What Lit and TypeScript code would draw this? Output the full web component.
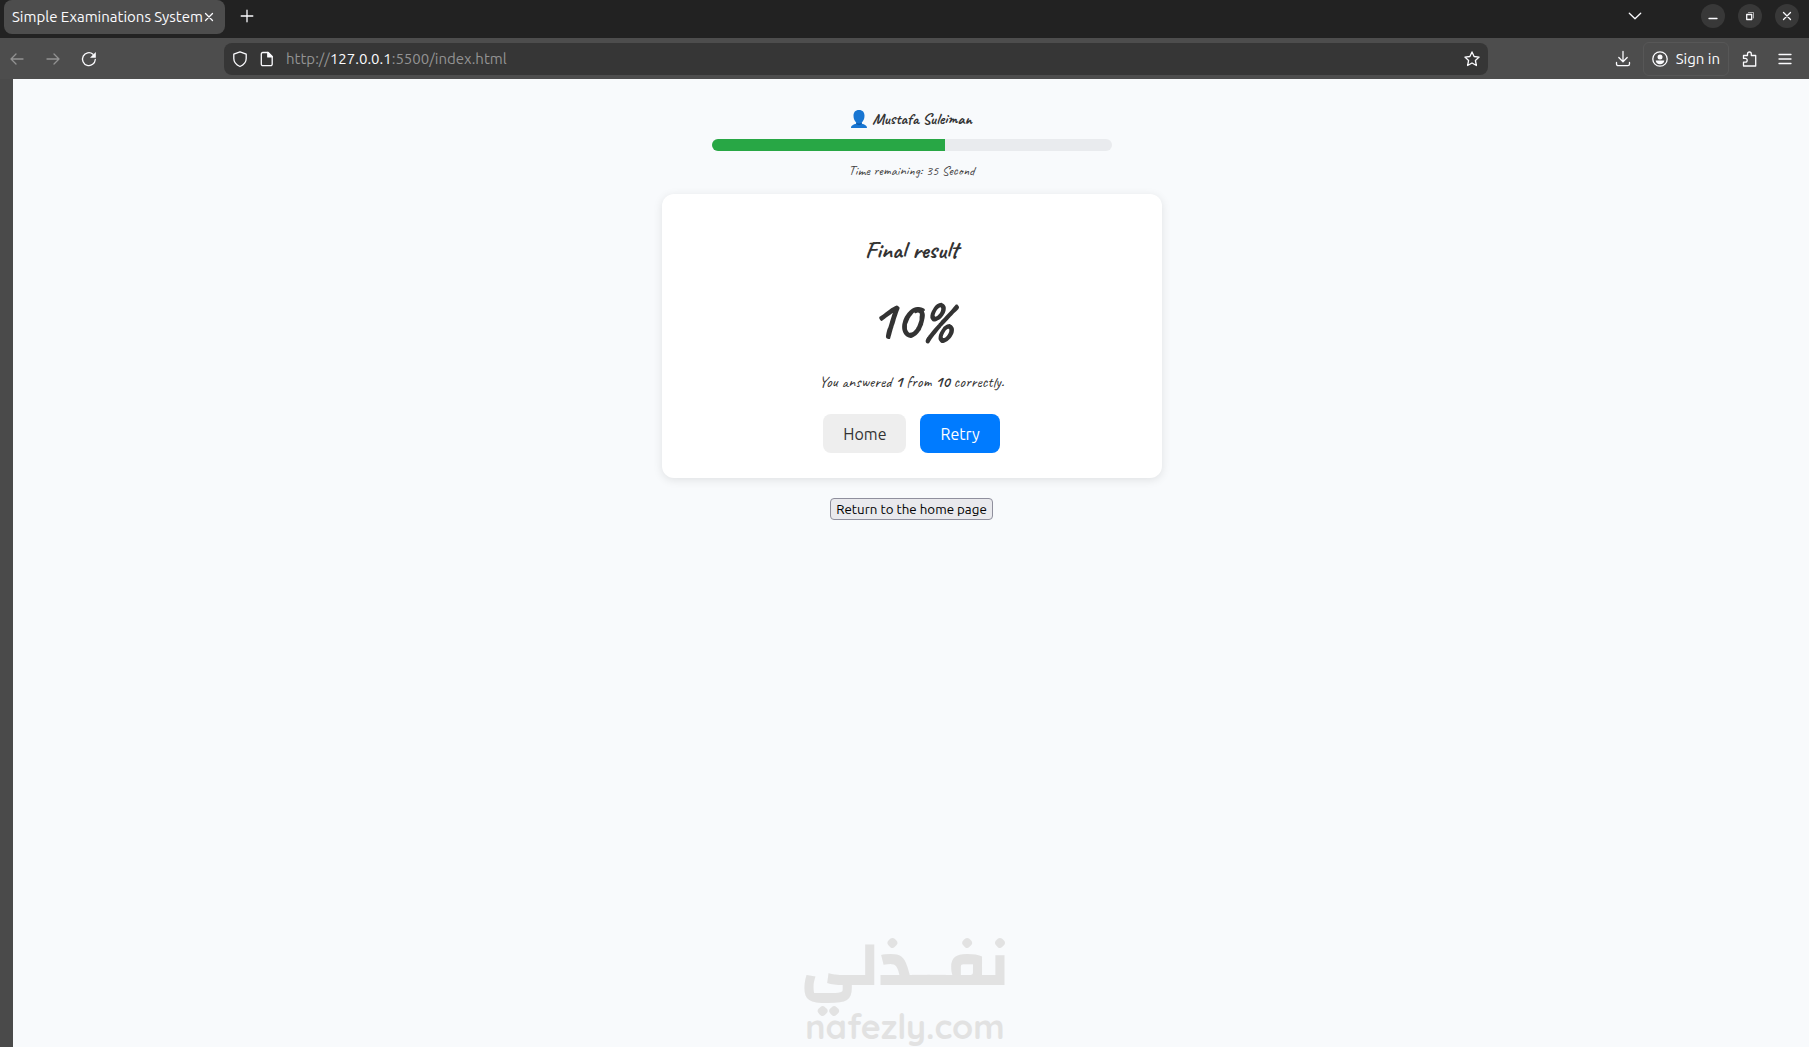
import { LitElement, html, css, svg } from "lit";
import { customElement, property, state } from "lit/decorators.js";

const icons: Record<string, unknown> = {
  back: svg`<path d="M14 8H2M7 3 2 8l5 5"/>`,
  forward: svg`<path d="M2 8h12M9 3l5 5-5 5"/>`,
  reload: svg`<path d="M14.300 8.500A6.400 6.400 0 1 1 12 3.200"/><path d="M14.800 1v5.800H9z" fill="currentColor" stroke="none"/>`,
  shield: svg`<path d="M8 .8 14.200 3.200v4.300c0 3.800-2.600 6.400-6.200 8-3.600-1.600-6.200-4.200-6.200-8V3.200z"/>`,
  page: svg`<path d="M3.800 1.500h5.400l4 4v7.700a1.500 1.500 0 0 1-1.500 1.500H3.800a1.500 1.500 0 0 1-1.500-1.500V3a1.500 1.500 0 0 1 1.500-1.500z"/><path d="M8.800 1.500v4.400h4.400z" fill="currentColor"/>`,
  star: svg`<path d="M8 .9l2.100 4.600 5 .6-3.700 3.400 1 5L8 12l-4.400 2.500 1-5L.9 6.100l5-.6z"/>`,
  download: svg`<path d="M8 .5v10M3.800 6.500 8 10.700l4.200-4.200M1.500 11.500v1.500a1.700 1.700 0 0 0 1.700 1.700h9.600a1.700 1.700 0 0 0 1.700-1.700v-1.500"/>`,
  account: svg`<circle cx="8" cy="8" r="7.200"/><circle cx="8" cy="6" r="2.500" fill="currentColor" stroke="none"/><path d="M3.700 9.500h8.600c0 2.200-2 3.700-4.300 3.700s-4.300-1.500-4.300-3.700z" fill="currentColor" stroke="none"/>`,
  puzzle: svg`<path d="M1.500 15v-3.800h1.800a1.900 1.900 0 0 0 0-3.800H1.500V4.500h4V2.900a1.900 1.900 0 0 1 3.800 0v1.600h4.400V15z"/>`,
  menu: svg`<path d="M2 3.500h12M2 8h12M2 12.500h12"/>`,
  plus: svg`<path d="M8 2.200v11.600M2.200 8h11.600"/>`,
  close: svg`<path d="M4.500 4.500l7 7M11.500 4.500l-7 7"/>`,
  chevron: svg`<path d="M2.300 5.200 8 10.700l5.700-5.500"/>`,
  minimize: svg`<path d="M4 10.500h8"/>`,
  restore: svg`<path d="M4.700 6.500h5v5h-5z"/><path d="M6.500 4.500h5v5.500" stroke-width="1" opacity=".6"/>`,
};

const icon = (name: string) => html`<svg
  class="icon"
  viewBox="0 0 16 16"
  width="16"
  height="16"
  aria-hidden="true"
>${icons[name]}</svg>`;

@customElement("browser-chrome")
export class BrowserChrome extends LitElement {
  static styles = css`
    :host {
      display: block;
      color: #fbfbfe;
      font: 15px/20px Ubuntu, "Noto Sans", "Open Sans", sans-serif;
    }
    button {
      all: unset;
      box-sizing: border-box;
      display: inline-flex;
      align-items: center;
      justify-content: center;
    }
    .icon {
      display: block;
      fill: none;
      stroke: currentColor;
      stroke-width: 1.3;
      stroke-linejoin: round;
      stroke-linecap: round;
      overflow: visible;
    }
    .strip {
      display: flex;
      align-items: center;
      height: 38px;
      box-sizing: border-box;
      padding: 0 10px 6px 4px;
      background: #222;
    }
    .tab {
      display: flex;
      align-items: center;
      justify-content: space-between;
      box-sizing: border-box;
      width: 221px;
      height: 34px;
      padding: 0 8px;
      border-radius: 8px;
      background: #4d4d4d;
      margin-bottom: -2px;
      white-space: nowrap;
    }
    .dismiss {
      margin-left: -2px;
    }
    .new {
      margin-left: 14px;
    }
    .list {
      margin-left: auto;
      margin-right: 58px;
    }
    .windows {
      display: flex;
      gap: 13px;
    }
    .window {
      width: 24px;
      height: 24px;
      border-radius: 50%;
      background: #383838;
    }
    .bar {
      display: flex;
      align-items: center;
      height: 41px;
      box-sizing: border-box;
      padding: 0 16px 0 9px;
      background: #4d4d4d;
    }
    .nav {
      display: flex;
      gap: 20px;
      width: 215px;
    }
    .nav button:disabled {
      color: #929292;
    }
    .address {
      display: flex;
      align-items: center;
      flex: 1;
      gap: 11px;
      height: 32px;
      box-sizing: border-box;
      padding: 0 8px;
      border-radius: 8px;
      background: #363636;
    }
    .url {
      flex: 1;
      color: #939393;
      text-decoration: none;
    }
    .host {
      color: #fbfbfe;
    }
    .tools {
      display: flex;
      align-items: center;
      justify-content: flex-end;
      width: 305px;
    }
    .sign {
      gap: 8px;
      height: 34px;
      margin: 0 13px 0 12px;
      padding: 0 8px;
      border: 1px solid #575757;
      border-radius: 6px;
      white-space: nowrap;
    }
    .menu {
      margin-left: 19px;
    }
  `;

  render() {
    return html`
      <div class="strip">
        <div class="tab">
          <span>Simple Examinations System</span>
          <button class="dismiss" aria-label="Close tab">${icon("close")}</button>
        </div>
        <button class="new" aria-label="New tab">${icon("plus")}</button>
        <button class="list" aria-label="List all tabs">${icon("chevron")}</button>
        <div class="windows">
          <button class="window" aria-label="Minimize">${icon("minimize")}</button>
          <button class="window" aria-label="Restore">${icon("restore")}</button>
          <button class="window" aria-label="Close">${icon("close")}</button>
        </div>
      </div>
      <div class="bar">
        <div class="nav">
          <button disabled aria-label="Back">${icon("back")}</button>
          <button disabled aria-label="Forward">${icon("forward")}</button>
          <button aria-label="Reload">${icon("reload")}</button>
        </div>
        <div class="address">
          <button aria-label="Tracking protection">${icon("shield")}</button>
          <button aria-label="Site information">${icon("page")}</button>
          <a class="url" href="http://127.0.0.1:5500/index.html"
            >http://<span class="host">127.0.0.1</span>:5500/index.html</a
          >
          <button aria-label="Bookmark">${icon("star")}</button>
        </div>
        <div class="tools">
          <button aria-label="Downloads">${icon("download")}</button>
          <button class="sign">${icon("account")}<span>Sign in</span></button>
          <button aria-label="Extensions">${icon("puzzle")}</button>
          <button class="menu" aria-label="Menu">${icon("menu")}</button>
        </div>
      </div>
    `;
  }
}

@customElement("exam-result")
export class ExamResult extends LitElement {
  @property() name = "";
  @property({ type: Number }) remaining = 0;
  @property({ type: Number }) limit = 60;
  @property({ type: Number }) correct = 0;
  @property({ type: Number }) total = 1;

  static styles = css`
    :host {
      display: flex;
      flex-direction: column;
      align-items: center;
      color: #333;
      font-family: Caveat, cursive;
    }
    .user {
      display: flex;
      align-items: center;
      gap: 5px;
      height: 24px;
      font-size: 16px;
      font-weight: 700;
      white-space: nowrap;
    }
    .track {
      width: 400px;
      max-width: 90%;
      height: 12px;
      margin-top: 8px;
      border-radius: 6px;
      background: #e9ebee;
      overflow: hidden;
    }
    .fill {
      height: 100%;
      background: #28a745;
    }
    .time {
      margin-top: 10px;
      font-size: 14px;
      line-height: 20px;
      color: #444;
    }
    .card {
      display: flex;
      flex-direction: column;
      align-items: center;
      box-sizing: border-box;
      width: 500px;
      max-width: 90%;
      margin-top: 13px;
      padding: 42px 24px 25px;
      border-radius: 12px;
      background: #fff;
      box-shadow: 0 2px 10px rgba(0, 0, 0, 0.1);
    }
    h2 {
      margin: 0;
      font-size: 24px;
      line-height: 28px;
    }
    .score {
      margin-top: 28px;
      font-size: 56px;
      font-weight: 700;
      line-height: 56px;
    }
    p {
      margin: 24px 0 22px;
      font-size: 16px;
      line-height: 20px;
    }
    .actions {
      display: flex;
      gap: 14px;
    }
    button {
      font-family: Ubuntu, "Noto Sans", "Open Sans", sans-serif;
    }
    .action {
      height: 39px;
      padding: 0 20px;
      border: 0;
      border-radius: 8px;
      background: #eee;
      color: #333;
      font-size: 16px;
    }
    .primary {
      background: #007bff;
      color: #fff;
    }
    .return {
      margin-top: 20px;
      height: 22px;
      padding: 1px 5px 0;
      border: 1px solid #8f8f9d;
      border-radius: 4px;
      background: #e9e9ed;
      color: #000;
      line-height: 20px;
    }
  `;

  render() {
    const percent = Math.round((this.correct / this.total) * 100);
    return html`
      <div class="user">
        <svg width="16" height="18" viewBox="0 0 16 18" aria-hidden="true">
          <path
            fill="#1976d2"
            d="M8 0c3.800 0 5.500 2.300 5.500 5.800 0 3.300-1.200 5.400-2.700 6.700v1.300c2.800.6 5.200 1.700 5.200 4.200H0c0-2.500 2.400-3.600 5.200-4.200v-1.300C3.700 11.200 2.500 9.100 2.500 5.800 2.500 2.300 4.200 0 8 0z"
          />
          <path fill="#0d5cad" d="M5.200 12.500c1.700 1.300 3.900 1.300 5.600 0v1.300c-1.500 1.800-4.100 1.800-5.600 0z" />
        </svg>
        <span>${this.name}</span>
      </div>
      <div class="track">
        <div class="fill" style="width:${(this.remaining / this.limit) * 100}%"></div>
      </div>
      <div class="time">Time remaining: ${this.remaining} Second</div>
      <section class="card">
        <h2>Final result</h2>
        <div class="score">${percent}%</div>
        <p>
          You answered <strong>${this.correct}</strong> from
          <strong>${this.total}</strong> correctly.
        </p>
        <div class="actions">
          <button class="action">Home</button>
          <button class="action primary">Retry</button>
        </div>
      </section>
      <button class="return">Return to the home page</button>
    `;
  }
}

@customElement("app-root")
export class AppRoot extends LitElement {
  @state() private correct = 1;

  static styles = css`
    :host {
      display: flex;
      flex-direction: column;
      min-height: 100vh;
      background: #4a4a4a;
    }
    .page {
      position: relative;
      flex: 1;
      box-sizing: border-box;
      margin-left: 13px;
      padding: 28px 0 0 1px;
      background: #f8fafc;
      overflow: hidden;
    }
    .mark {
      position: absolute;
      left: 0;
      right: 12px;
      bottom: 0;
      display: flex;
      flex-direction: column;
      align-items: center;
      color: #e2e2e2;
      font-weight: 700;
      pointer-events: none;
    }
    .arabic {
      font-family: Changa, Cairo, Tajawal, "DejaVu Sans", sans-serif;
      font-size: 64px;
      line-height: 84px;
    }
    .latin {
      font-family: Quicksand, "Varela Round", Comfortaa, Nunito, Lato, sans-serif;
      font-size: 34px;
      line-height: 40px;
    }
  `;

  render() {
    return html`
      <browser-chrome></browser-chrome>
      <main class="page">
        <exam-result
          name="Mustafa Suleiman"
          .remaining=${35}
          .limit=${60}
          .correct=${this.correct}
          .total=${10}
        ></exam-result>
        <div class="mark">
          <span class="arabic" lang="ar" dir="rtl">نفــذلي</span>
          <span class="latin">nafezly.com</span>
        </div>
      </main>
    `;
  }
}
